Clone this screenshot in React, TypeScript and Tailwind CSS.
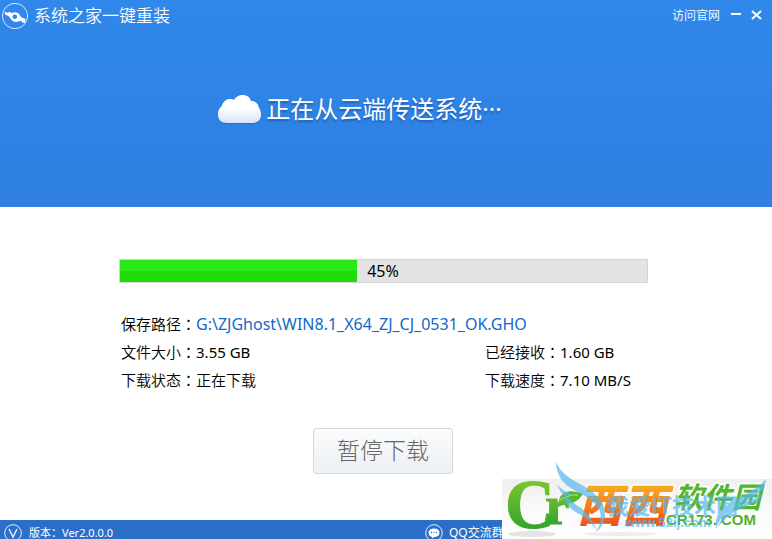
import type { ReactNode } from "react";

const PERCENT = 45;

function Field({ label, children }: { label: string; children: ReactNode }) {
  return (
    <div className="flex h-[25px] items-center whitespace-nowrap">
      <dt className="font-[350]">
        {label}
        <span className="font-['Noto_Sans_CJK_TC',sans-serif] leading-none">：</span>
      </dt>
      <dd>{children}</dd>
    </div>
  );
}

function BrandIcon() {
  return (
    <svg className="size-7 shrink-0" viewBox="0 0 28 28" fill="none" aria-hidden="true">
      <circle cx="14" cy="14" r="12.6" stroke="#cfe6ff" strokeWidth="1" />
      <path d="M3.500 9.500l3 1.200L9 9.800l1.500 1.400c3-1.700 7-.7 8.500 2.300.8 1.500 2.500 2.700 5.500 3.200l-.3 4-2.700-.2-1.500-1.700-2 .5c-3 1.600-7 .5-8.500-2.800C8.500 14.500 6.500 13.200 4.500 13z" fill="#fff" />
      <circle cx="13.8" cy="14.800" r="2.300" fill="#2f86e8" />
    </svg>
  );
}

function Cloud() {
  const outline =
    "M9 28C3 28 0 24.500 0 19.500c0-3.500 1-6 3.500-8C5 6.500 8 4 12 4c1.500 0 3 .2 4 .7C18 1.800 21 0 24.500 0c4.500 0 7.500 2.300 8.500 6 4.500 0 7.500 2.500 7.800 6.500C42.300 14.500 43 17 43 20c0 5-3.500 8-8.500 8z";
  return (
    <svg className="h-8 w-11 shrink-0" viewBox="0 0 44 32" aria-hidden="true">
      <defs>
        <linearGradient id="cloud" x1="0" y1="0" x2="0" y2="1">
          <stop offset="0.45" stopColor="#ffffff" />
          <stop offset="1" stopColor="#d5e6f8" />
        </linearGradient>
      </defs>
      <path d={outline} transform="translate(0 3)" fill="#1d5fb5" opacity=".5" />
      <path d={outline} transform="translate(0 2)" fill="url(#cloud)" />
    </svg>
  );
}

function SiteLogo() {
  return (
    <svg className="absolute right-0 bottom-0 h-20 w-[270px]" viewBox="0 0 270 80" aria-label="西西软件园 CR173.COM">
      <defs>
        <linearGradient id="panel" x1="0" y1="0" x2="0" y2="1">
          <stop offset="0" stopColor="#efefef" />
          <stop offset="0.55" stopColor="#fafafa" />
          <stop offset="1" stopColor="#ffffff" />
        </linearGradient>
        <linearGradient id="leaf" x1="0" y1="0" x2="0" y2="1">
          <stop offset="0" stopColor="#8fd02c" />
          <stop offset="1" stopColor="#1f9a2e" />
        </linearGradient>
        <linearGradient id="orange" x1="0" y1="0" x2="0" y2="1">
          <stop offset="0.2" stopColor="#f9b21f" />
          <stop offset="0.9" stopColor="#ee4a1c" />
        </linearGradient>
      </defs>
      <rect y="20" width="270" height="60" fill="url(#panel)" />
      <ellipse cx="30" cy="75" rx="24" ry="3" fill="#e4e4e4" />
      <ellipse cx="118" cy="75" rx="38" ry="2" fill="#ededed" />
      <g fontFamily="'Liberation Serif', serif" fontWeight="700" fill="url(#leaf)" stroke="url(#leaf)" strokeWidth="1">
        <text x="3" y="69" fontSize="69">C</text>
        <text x="43" y="65" fontSize="55">r</text>
      </g>
      <path d="M58 38c5-7 13-7 23-3-6 9-14 12-21 6l-4 4z" fill="#58b82c" />
      <path d="M58 41c6-4 11-5 18-5" stroke="#c7ec84" fill="none" />
      <g fontFamily="'Noto Sans CJK SC', sans-serif" strokeLinejoin="round" paintOrder="stroke">
        <text x="75" y="63" fontSize="45" fontStyle="italic" fontWeight="900" fill="url(#orange)" stroke="#fff" strokeWidth="3">西西</text>
        <text x="172" y="49" fontSize="29" fontWeight="700" fontStyle="italic" fill="#54b62d" stroke="#fff" strokeWidth="3">软件园</text>
      </g>
      <text x="164" y="66" fontFamily="'Liberation Sans', sans-serif" fontWeight="700" fontSize="15" fill="#4eb22c" stroke="#fff" strokeWidth="2" paintOrder="stroke">CR173. COM</text>
      <g fill="#58b7ee" opacity=".7">
        <path d="M54 3c4 9 11 15 22 21 15 8 27 17 27 31 0 8-4 14-9 18 4-7 6-13 4-20C95 43 85 38 74 32 61 26 54 16 54 3z" />
        <path d="M55 25c5 7 13 10 21 12-4 0-8 0-12-1 4 6 9 9 15 13 8 6 12 13 16 23-5-8-10-13-18-17-9-5-13-10-17-18 1 1 3 2 4 2-4-4-7-8-9-14z" />
        <path d="M264 20c0 10-9 17-22 23-15 7-24 14-28 27-2-13 5-21 19-29 13-7 23-12 31-21z" />
        <path d="M262 34c-5 8-13 12-20 14-10 4-18 10-26 20 4-12 12-19 23-24 9-3 16-5 23-10z" />
        <text x="105" y="55" fontFamily="'Noto Sans CJK SC', sans-serif" fontWeight="700" fontSize="22">我爱IT技术网</text>
        <text x="123" y="68" fontFamily="'Liberation Sans', sans-serif" fontWeight="700" fontSize="13">www.52ij.com</text>
      </g>
    </svg>
  );
}

export default function App() {
  return (
    <div className="relative flex h-screen flex-col overflow-hidden bg-white font-['Noto_Sans','Noto_Sans_CJK_SC',sans-serif] text-black">
      <header className="flex h-[207px] shrink-0 flex-col bg-linear-to-b from-[#3088ea] to-[#2e7fe0] text-white">
        <div className="flex h-8 items-center justify-between pr-2 pl-px">
          <div className="flex items-center gap-1">
            <BrandIcon />
            <h1 className="pl-px text-[17px] leading-6 font-[350]">系统之家一键重装</h1>
          </div>
          <nav className="flex h-7 items-center">
            <a href="#site" className="text-xs font-[350]">访问官网</a>
            <button type="button" aria-label="最小化" className="ml-2 flex size-4 items-center justify-center">
              <svg className="size-3" viewBox="0 0 12 12" aria-hidden="true"><path d="M1 4h10" stroke="#fff" strokeWidth="2" /></svg>
            </button>
            <button type="button" aria-label="关闭" className="ml-1 flex size-4 items-center justify-center">
              <svg className="size-3" viewBox="0 0 12 12" aria-hidden="true"><path d="M2 1l9 8M11 1l-9 8" stroke="#fff" strokeWidth="2" /></svg>
            </button>
          </nav>
        </div>
        <div className="flex items-center justify-center gap-1 pt-[61px] pr-[52px]">
          <Cloud />
          <p className="text-2xl [text-shadow:0_2px_2px_#1d5fb5]">正在从云端传送系统<span>···</span></p>
        </div>
      </header>

      <main className="flex-1 pt-[52px] pr-[124px] pl-[119px]">
        <div className="flex h-6 border border-[#d4d4d4] bg-[#e3e3e3]" role="progressbar" aria-label="下载进度" aria-valuenow={PERCENT} aria-valuemin={0} aria-valuemax={100}>
          <div className="bg-linear-to-b from-[#2ae718] from-50% to-[#1fdc08] to-50%" style={{ width: `${PERCENT}%` }} />
          <span className="pl-2.5 text-base leading-[22px]">{PERCENT}%</span>
        </div>
        <dl className="mt-[29px] grid grid-cols-[364px_1fr] gap-y-[3px] pl-0.5 text-[15px] leading-[25px]">
          <div className="col-span-2">
            <Field label="保存路径">
              <a href="#path" className="text-base text-[#1269c7]">G:\ZJGhost\WIN8.1_X64_ZJ_CJ_0531_OK.GHO</a>
            </Field>
          </div>
          <Field label="文件大小">3.55 GB</Field>
          <Field label="已经接收">1.60 GB</Field>
          <Field label="下载状态"><span className="font-[350]">正在下载</span></Field>
          <Field label="下载速度">7.10 MB/S</Field>
        </dl>
        <div className="mt-[35px] flex justify-center pr-px">
          <button type="button" className="h-[46px] w-[140px] rounded-[3px] border border-[#d4d8dc] bg-linear-to-b from-[#fafbfc] to-[#edf0f4] pb-0.5 text-[23px] font-light text-[#666]">
            暂停下载
          </button>
        </div>
      </main>

      <footer className="flex h-[19px] shrink-0 items-start bg-[#2c6fc9] text-white">
        <div className="flex w-[425px] items-center gap-[7px] pt-1 pl-1 text-[11px] leading-[18px]">
          <svg className="size-[18px]" viewBox="0 0 18 18" fill="none" stroke="#e4f0ff" aria-hidden="true">
            <circle cx="9" cy="9" r="8.300" />
            <path d="M5 5l4 8 4-8" strokeWidth="1.500" />
          </svg>
          <span>版本：Ver2.0.0.0</span>
        </div>
        <a href="#group" className="flex items-center gap-1.5 pt-1 text-xs leading-[18px]">
          <svg className="size-[18px]" viewBox="0 0 18 18" fill="none" aria-hidden="true">
            <circle cx="9" cy="9" r="8.300" stroke="#e4f0ff" />
            <path d="M9 4.500c3.500 0 5.500 1.800 5.500 4.200S12.500 13 9 13l-2 1.500V13c-2-.5-3.500-2-3.500-4.300C3.500 6.300 5.500 4.500 9 4.500z" fill="#fff" />
            <path d="M6 8.500h1M8.500 8.500h1M11 8.500h1" stroke="#2c6fc9" strokeWidth="1.500" />
          </svg>
          QQ交流群
        </a>
      </footer>
      <SiteLogo />
    </div>
  );
}
